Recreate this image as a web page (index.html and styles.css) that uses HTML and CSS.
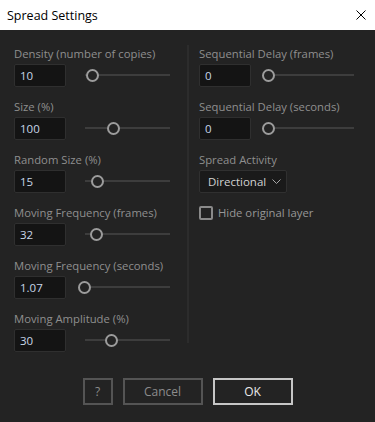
FILE: index.html
```html
<!DOCTYPE html>
<html>
<head>
    <meta charset="utf-8">
    <title>Spread Settings</title>
    <link rel="stylesheet" href="styles.css">
</head>
<body>
    <div class="titlebar">
        <span class="title">Spread Settings</span>
        <svg class="close" width="10" height="10" viewBox="0 0 10 10">
            <path d="M0.5 0.5 L9.5 9.5 M9.5 0.5 L0.5 9.5" stroke="#000" stroke-width="1" fill="none"/>
        </svg>
    </div>

    <div class="dialog">
        <div class="columns">
            <div class="col col-left">
                <div class="field">
                    <div class="label">Density (number of copies)</div>
                    <div class="row">
                        <div class="input">10</div>
                        <div class="slider"><div class="track"></div><div class="knob" style="left: 14px;"></div></div>
                    </div>
                </div>
                <div class="field">
                    <div class="label">Size (%)</div>
                    <div class="row">
                        <div class="input">100</div>
                        <div class="slider"><div class="track"></div><div class="knob" style="left: 35px;"></div></div>
                    </div>
                </div>
                <div class="field">
                    <div class="label">Random Size (%)</div>
                    <div class="row">
                        <div class="input">15</div>
                        <div class="slider"><div class="track"></div><div class="knob" style="left: 19px;"></div></div>
                    </div>
                </div>
                <div class="field">
                    <div class="label">Moving Frequency (frames)</div>
                    <div class="row">
                        <div class="input">32</div>
                        <div class="slider"><div class="track"></div><div class="knob" style="left: 18px;"></div></div>
                    </div>
                </div>
                <div class="field">
                    <div class="label">Moving Frequency (seconds)</div>
                    <div class="row">
                        <div class="input">1.07</div>
                        <div class="slider"><div class="track"></div><div class="knob" style="left: 6px;"></div></div>
                    </div>
                </div>
                <div class="field">
                    <div class="label">Moving Amplitude (%)</div>
                    <div class="row">
                        <div class="input">30</div>
                        <div class="slider"><div class="track"></div><div class="knob" style="left: 33px;"></div></div>
                    </div>
                </div>
            </div>

            <div class="col col-right">
                <div class="field">
                    <div class="label">Sequential Delay (frames)</div>
                    <div class="row">
                        <div class="input">0</div>
                        <div class="slider"><div class="track"></div><div class="knob" style="left: 5px;"></div></div>
                    </div>
                </div>
                <div class="field">
                    <div class="label">Sequential Delay (seconds)</div>
                    <div class="row">
                        <div class="input">0</div>
                        <div class="slider"><div class="track"></div><div class="knob" style="left: 5px;"></div></div>
                    </div>
                </div>
                <div class="field">
                    <div class="label">Spread Activity</div>
                    <div class="dropdown">
                        <span>Directional</span>
                        <svg class="chevron" width="9" height="5" viewBox="0 0 9 5">
                            <path d="M0.5 0.5 L4.5 4.5 L8.5 0.5" stroke="#a8a8a8" stroke-width="1" fill="none"/>
                        </svg>
                    </div>
                </div>
                <label class="check">
                    <span class="box"></span>
                    <span>Hide original layer</span>
                </label>
            </div>
        </div>

        <div class="buttons">
            <button class="btn btn-help">?</button>
            <button class="btn btn-cancel">Cancel</button>
            <button class="btn btn-ok">OK</button>
        </div>
    </div>
</body>
</html>
```

FILE: styles.css
```css
html, body {
    margin: 0;
    padding: 0;
}

body {
    width: 375px;
    height: 422px;
    overflow: hidden;
    background-color: #232323;
    font-family: "Open Sans", "Liberation Sans", sans-serif;
}

.titlebar {
    height: 30px;
    background-color: #fff;
    display: flex;
    align-items: center;
    justify-content: space-between;
    padding: 0 9px 0 7px;
}

.title {
    font-size: 12.5px;
    color: #000;
}

.close {
    display: block;
}

.dialog {
    height: 392px;
}

.columns {
    display: flex;
    margin-top: 15px;
    height: 298px;
}

.col {
    box-sizing: border-box;
}

.col-left {
    width: 187px;
    padding: 1px 17px 0 14px;
}

.col-right {
    flex: 1;
    border-left: 2px solid #2c2c2c;
    padding: 1px 21px 0 10px;
}

.field {
    margin-bottom: 12px;
}

.label {
    font-size: 11.3px;
    line-height: 16px;
    color: #8f8f8f;
    margin-bottom: 2px;
    white-space: nowrap;
}

.row {
    display: flex;
    align-items: center;
    gap: 12px;
}

.input {
    box-sizing: border-box;
    width: 52px;
    height: 23px;
    background-color: #141414;
    border: 1px solid #2f2f2f;
    border-radius: 2px;
    color: #c8d6e8;
    font-size: 11.5px;
    line-height: 21px;
    padding-left: 5px;
}

.slider {
    position: relative;
    flex: 1;
    height: 23px;
}

.track {
    margin: 10px 0 0 7px;
    height: 2px;
    background-color: #3d3d3d;
}

.knob {
    position: absolute;
    top: 5px;
    width: 9px;
    height: 9px;
    margin-left: -6.5px;
    border: 2px solid #9c9c9c;
    border-radius: 50%;
    background-color: #232323;
}

.dropdown {
    box-sizing: border-box;
    width: 88px;
    height: 23px;
    background-color: #1a1a1a;
    border: 1px solid #303030;
    border-radius: 2px;
    display: flex;
    align-items: center;
    justify-content: space-between;
    padding: 0 5px 0 8px;
    color: #d2d2d2;
    font-size: 11.5px;
}

.chevron {
    display: block;
}

.check {
    display: flex;
    align-items: center;
    gap: 5px;
    color: #979797;
    font-size: 11.3px;
}

.box {
    box-sizing: border-box;
    width: 14px;
    height: 14px;
    border: 2px solid #8a8a8a;
    border-radius: 2px;
}

.buttons {
    display: flex;
    justify-content: center;
    gap: 10px;
    padding-top: 35px;
}

.btn {
    box-sizing: border-box;
    height: 27px;
    background-color: #232323;
    border: 2px solid #545454;
    color: #8c8c8c;
    font-family: inherit;
    font-size: 12px;
    padding: 0;
}

.btn-help {
    width: 30px;
}

.btn-cancel {
    width: 80px;
}

.btn-ok {
    width: 80px;
    border-color: #c6c6c6;
    color: #eaeaea;
}
```
